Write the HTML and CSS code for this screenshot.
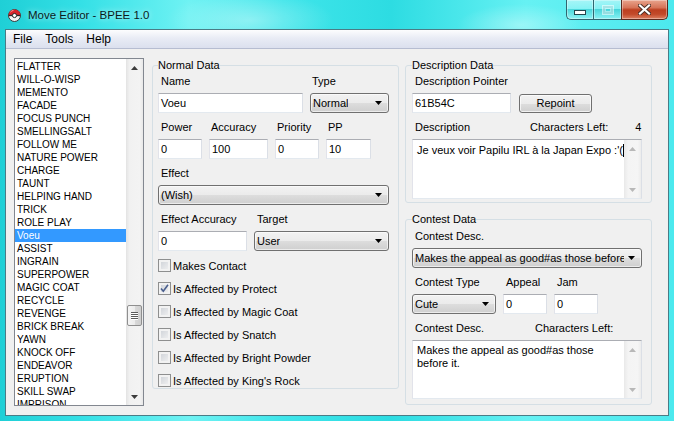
FILE: index.html
```html
<!DOCTYPE html>
<html>
<head>
<meta charset="utf-8">
<title>Move Editor - BPEE 1.0</title>
<link rel="stylesheet" href="styles.css">
</head>
<body>
<div class="window">
  <div class="titlebar">
    <svg class="app-icon" width="13" height="13" viewBox="0 0 13 13">
      <circle cx="6.5" cy="6.5" r="6" fill="#f4f4f4" stroke="#3a3a3a" stroke-width="1"/>
      <path d="M0.5 6.5 A6 6 0 0 1 12.5 6.5 Z" fill="#d8242c"/>
      <path d="M2.5 3.2 A4.5 4.5 0 0 1 5.5 1.4" stroke="#ff9a9a" stroke-width="1" fill="none"/>
      <line x1="0.5" y1="6.5" x2="12.5" y2="6.5" stroke="#2a2a2a" stroke-width="1.3"/>
      <circle cx="6.5" cy="6.5" r="2.1" fill="#ffffff" stroke="#2a2a2a" stroke-width="1"/>
    </svg>
    <span class="title">Move Editor - BPEE 1.0</span>
    <div class="controls">
      <div class="ctl min"><span class="min-glyph"></span></div>
      <div class="ctl max"><span class="max-glyph"></span></div>
      <div class="ctl close">
        <svg width="13" height="11" viewBox="0 0 13 11">
          <path d="M2 1.5 L11 9.5 M11 1.5 L2 9.5" stroke="#4a2e26" stroke-width="4" stroke-linecap="square"/>
          <path d="M2 1.5 L11 9.5 M11 1.5 L2 9.5" stroke="#ffffff" stroke-width="2.2" stroke-linecap="square"/>
        </svg>
      </div>
    </div>
  </div>

  <div class="client">
    <div class="menubar">
      <span class="menu-item">File</span>
      <span class="menu-item">Tools</span>
      <span class="menu-item">Help</span>
    </div>

    <div class="content">
      <div class="listbox">
        <ul class="items">
          <li>FLATTER</li>
          <li>WILL-O-WISP</li>
          <li>MEMENTO</li>
          <li>FACADE</li>
          <li>FOCUS PUNCH</li>
          <li>SMELLINGSALT</li>
          <li>FOLLOW ME</li>
          <li>NATURE POWER</li>
          <li>CHARGE</li>
          <li>TAUNT</li>
          <li>HELPING HAND</li>
          <li>TRICK</li>
          <li>ROLE PLAY</li>
          <li class="sel">Voeu</li>
          <li>ASSIST</li>
          <li>INGRAIN</li>
          <li>SUPERPOWER</li>
          <li>MAGIC COAT</li>
          <li>RECYCLE</li>
          <li>REVENGE</li>
          <li>BRICK BREAK</li>
          <li>YAWN</li>
          <li>KNOCK OFF</li>
          <li>ENDEAVOR</li>
          <li>ERUPTION</li>
          <li>SKILL SWAP</li>
          <li>IMPRISON</li>
        </ul>
        <div class="vscroll">
          <div class="sb-btn">
            <svg width="7" height="4" viewBox="0 0 7 4"><polygon points="0,4 7,4 3.5,0" fill="#3c3c3c"/></svg>
          </div>
          <div class="sb-track">
            <div class="thumb">
              <span class="grip"></span><span class="grip"></span><span class="grip"></span><span class="grip"></span>
            </div>
          </div>
          <div class="sb-btn">
            <svg width="7" height="4" viewBox="0 0 7 4"><polygon points="0,0 7,0 3.5,4" fill="#3c3c3c"/></svg>
          </div>
        </div>
      </div>

      <fieldset class="group normal">
        <legend>Normal Data</legend>
        <div class="row">
          <div class="field w145"><span class="lbl">Name</span><div class="tb">Voeu</div></div>
          <div class="field w79"><span class="lbl lbl2">Type</span>
            <div class="combo"><span class="ctext">Normal</span><svg class="arrow" width="7" height="4" viewBox="0 0 7 4"><polygon points="0,0 7,0 3.5,4" fill="#000"/></svg></div>
          </div>
        </div>
        <div class="row">
          <div class="field w44"><span class="lbl">Power</span><div class="tb">0</div></div>
          <div class="field w59"><span class="lbl lbl2">Accuracy</span><div class="tb">100</div></div>
          <div class="field w44"><span class="lbl lbl2">Priority</span><div class="tb">0</div></div>
          <div class="field w45"><span class="lbl lbl2">PP</span><div class="tb">10</div></div>
        </div>
        <div class="row">
          <div class="field w231"><span class="lbl">Effect</span>
            <div class="combo"><span class="ctext">(Wish)</span><svg class="arrow" width="7" height="4" viewBox="0 0 7 4"><polygon points="0,0 7,0 3.5,4" fill="#000"/></svg></div>
          </div>
        </div>
        <div class="row">
          <div class="field w89"><span class="lbl">Effect Accuracy</span><div class="tb">0</div></div>
          <div class="field w135"><span class="lbl">Target</span>
            <div class="combo"><span class="ctext">User</span><svg class="arrow" width="7" height="4" viewBox="0 0 7 4"><polygon points="0,0 7,0 3.5,4" fill="#000"/></svg></div>
          </div>
        </div>
        <div class="checks">
          <div class="check"><span class="box"></span><span>Makes Contact</span></div>
          <div class="check"><span class="box"><svg width="11" height="11" viewBox="0 0 11 11"><path d="M2 5.5 L4.3 8.3 L9 1.8" stroke="#4a5f8e" stroke-width="1.6" fill="none"/></svg></span><span>Is Affected by Protect</span></div>
          <div class="check"><span class="box"></span><span>Is Affected by Magic Coat</span></div>
          <div class="check"><span class="box"></span><span>Is Affected by Snatch</span></div>
          <div class="check"><span class="box"></span><span>Is Affected by Bright Powder</span></div>
          <div class="check"><span class="box"></span><span>Is Affected by King's Rock</span></div>
        </div>
      </fieldset>

      <div class="rightcol">
        <fieldset class="group desc">
          <legend>Description Data</legend>
          <span class="lbl block">Description Pointer</span>
          <div class="row ptr">
            <div class="tb w99">61B54C</div>
            <div class="button">Repoint</div>
          </div>
          <div class="labelrow">
            <span class="lbl w115">Description</span>
            <span class="lbl">Characters Left:</span>
            <span class="lbl count">4</span>
          </div>
          <div class="memo h60">
            <div class="memo-text nowrap">Je veux voir Papilu IRL à la Japan Expo :'(<span class="caret"></span></div>
            <div class="memo-scroll">
              <svg width="7" height="4" viewBox="0 0 7 4"><polygon points="0,4 7,4 3.5,0" fill="#b8b8b8"/></svg>
              <svg width="7" height="4" viewBox="0 0 7 4"><polygon points="0,0 7,0 3.5,4" fill="#b8b8b8"/></svg>
            </div>
          </div>
        </fieldset>

        <fieldset class="group contest">
          <legend>Contest Data</legend>
          <span class="lbl block">Contest Desc.</span>
          <div class="row">
            <div class="combo w230"><span class="ctext clip">Makes the appeal as good#as those before</span><svg class="arrow" width="7" height="4" viewBox="0 0 7 4"><polygon points="0,0 7,0 3.5,4" fill="#000"/></svg></div>
          </div>
          <div class="row">
            <div class="field w84"><span class="lbl">Contest Type</span>
              <div class="combo"><span class="ctext">Cute</span><svg class="arrow" width="7" height="4" viewBox="0 0 7 4"><polygon points="0,0 7,0 3.5,4" fill="#000"/></svg></div>
            </div>
            <div class="field w44"><span class="lbl">Appeal</span><div class="tb">0</div></div>
            <div class="field w44"><span class="lbl">Jam</span><div class="tb">0</div></div>
          </div>
          <div class="labelrow">
            <span class="lbl w120">Contest Desc.</span>
            <span class="lbl">Characters Left:</span>
          </div>
          <div class="memo h59">
            <div class="memo-text">Makes the appeal as good#as those before it.</div>
            <div class="memo-scroll">
              <svg width="7" height="4" viewBox="0 0 7 4"><polygon points="0,4 7,4 3.5,0" fill="#b8b8b8"/></svg>
              <svg width="7" height="4" viewBox="0 0 7 4"><polygon points="0,0 7,0 3.5,4" fill="#b8b8b8"/></svg>
            </div>
          </div>
        </fieldset>
      </div>
    </div>
  </div>
</div>
</body>
</html>
```

FILE: styles.css
```css
* { box-sizing: border-box; }

html, body {
  margin: 0;
  padding: 0;
}

body {
  width: 674px;
  height: 421px;
  overflow: hidden;
  font-family: "Liberation Sans", Arial, sans-serif;
  font-size: 11px;
  color: #000;
}

.window {
  height: 421px;
  display: flex;
  flex-direction: column;
  background:
    radial-gradient(ellipse 120px 40px at 250px 20px, rgba(255,255,255,0.35), rgba(255,255,255,0) 70%),
    radial-gradient(ellipse 90px 30px at 520px 25px, rgba(255,255,255,0.35), rgba(255,255,255,0) 70%),
    linear-gradient(90deg, #1fcfd6 0%, #34e0e6 12%, #6ff2f3 28%, #3fe5ea 42%, #2ddce2 58%, #66f1f3 78%, #4ce9ee 100%);
}

/* title bar */
.titlebar {
  height: 29px;
  flex: none;
  display: flex;
  align-items: center;
}

.app-icon {
  margin-left: 8px;
  margin-top: 1px;
  flex: none;
}

.title {
  margin-left: 7px;
  margin-top: 1px;
  font-size: 11.5px;
  color: #0b1a1c;
  text-shadow: 0 0 6px rgba(255,255,255,0.8);
}

.controls {
  display: flex;
  align-self: flex-start;
  margin-left: auto;
  margin-right: 6px;
}

.ctl {
  height: 20px;
  display: flex;
  align-items: center;
  justify-content: center;
  border: 1px solid #2f6670;
  border-top: none;
  box-shadow: inset 0 0 0 1px rgba(255,255,255,0.35);
}

.min {
  width: 27px;
  border-right: none;
  border-bottom-left-radius: 5px;
  background: linear-gradient(rgba(255,255,255,0.45), rgba(255,255,255,0.25) 50%, rgba(0,110,120,0.18) 50%, rgba(255,255,255,0.3));
}

.max {
  width: 28px;
  border-right: none;
  background: linear-gradient(rgba(255,255,255,0.45), rgba(255,255,255,0.25) 50%, rgba(0,110,120,0.18) 50%, rgba(255,255,255,0.3));
}

.close {
  width: 47px;
  border-bottom-right-radius: 5px;
  border-color: #5a2b1f;
  background: linear-gradient(#e9a48d, #d67458 40%, #bd3f20 52%, #c24a2a 75%, #dc8062);
}

.min-glyph {
  width: 12px;
  height: 5px;
  margin-top: 6px;
  background: #fff;
  border: 1px solid #23464d;
}

.max-glyph {
  width: 12px;
  height: 10px;
  border: 1px solid rgba(255,255,255,0.55);
  box-shadow: inset 0 0 0 2px rgba(120,190,195,0.35), inset 0 0 0 3px rgba(255,255,255,0.45);
}

/* client area */
.client {
  flex: 1;
  min-height: 0;
  margin: 0 5px 5px 5px;
  border: 1px solid #4a7c86;
  background: #f0f0f0;
  display: flex;
  flex-direction: column;
}

.menubar {
  height: 19px;
  flex: none;
  display: flex;
  align-items: center;
  padding-left: 7px;
  font-size: 12px;
  background: linear-gradient(#fdfdfe, #e9ecf5 45%, #dbe0ee);
  border-bottom: 1px solid #b6bdd1;
}

.menu-item {
  margin-right: 13px;
}

.content {
  flex: 1;
  display: flex;
  align-items: flex-start;
  padding: 9px 0 0 8px;
}

/* list box */
.listbox {
  width: 130px;
  height: 348px;
  flex: none;
  display: flex;
  border: 1px solid #828790;
  background: #fff;
  overflow: hidden;
}

.items {
  flex: 1;
  margin: 0;
  padding: 1px 0 0 0;
  list-style: none;
  overflow: hidden;
  font-size: 10px;
}

.items li {
  height: 13px;
  line-height: 13px;
  padding-left: 2px;
  white-space: nowrap;
}

.items li.sel {
  background: #3399ff;
  color: #fff;
}

.vscroll {
  width: 17px;
  flex: none;
  display: flex;
  flex-direction: column;
  background: linear-gradient(90deg, #e3e3e3, #f1f1f1 20%, #f3f3f3 80%, #e8e8e8);
}

.sb-btn {
  height: 17px;
  flex: none;
  display: flex;
  align-items: center;
  justify-content: center;
}

.sb-track {
  flex: 1;
}

.thumb {
  margin: 229px 1px 0 1px;
  height: 21px;
  border: 1px solid #8f8f8f;
  border-radius: 2px;
  background: linear-gradient(90deg, #f5f5f5, #ececec 50%, #dadada 51%, #cfcfcf);
  display: flex;
  flex-direction: column;
  align-items: center;
  justify-content: center;
  gap: 1px;
}

.grip {
  width: 7px;
  height: 1px;
  background: #5b5b5b;
  box-shadow: 0 1px 0 #ffffff;
}

/* group boxes */
.group {
  margin: 1px 0 0 0;
  border: 1px solid #d5dfe5;
  border-radius: 3px;
  width: 247px;
  min-width: 0;
}

.group legend {
  padding: 0;
  line-height: 13px;
  height: 13px;
}

.normal {
  margin-left: 8px;
  padding: 3px 5px 1px 5px;
}

.rightcol {
  margin-left: 6px;
  width: 247px;
  display: flex;
  flex-direction: column;
}

.desc {
  padding: 3px 6px 3px 6px;
}

.contest {
  margin-top: 10px;
  padding: 4px 6px 5px 6px;
}

.row {
  display: flex;
  gap: 7px;
  margin-bottom: 8px;
}

.field {
  display: flex;
  flex-direction: column;
}

.lbl {
  height: 13px;
  line-height: 13px;
  padding-left: 3px;
  white-space: nowrap;
}

.lbl2 { padding-left: 2px; }

.field .lbl { margin-bottom: 5px; }

.lbl.block {
  display: block;
  margin-bottom: 5px;
}

.labelrow {
  display: flex;
  margin-bottom: 5px;
}

.w44 { width: 44px; }
.w45 { width: 45px; }
.w59 { width: 59px; }
.w79 { width: 79px; }
.w84 { width: 84px; }
.w89 { width: 89px; }
.w99 { width: 99px; }
.w115 { width: 115px; }
.w120 { width: 120px; }
.w135 { width: 135px; }
.w145 { width: 145px; }
.w230 { width: 230px; }
.w231 { width: 231px; }

.count {
  width: 34px;
  text-align: right;
  padding-right: 1px;
}

/* text boxes */
.tb {
  height: 20px;
  line-height: 18px;
  padding: 0 2px;
  background: #fff;
  border: 1px solid;
  border-color: #abadb3 #dbdfe6 #e3e9ef #e2e3ea;
  white-space: nowrap;
}

/* combo boxes */
.combo {
  height: 20px;
  display: flex;
  align-items: center;
  padding-left: 2px;
  border: 1px solid #707070;
  border-radius: 3px;
  background: linear-gradient(#f2f2f2, #ebebeb 50%, #dddddd 51%, #cfcfcf);
  box-shadow: inset 0 0 0 1px rgba(255,255,255,0.6);
  overflow: hidden;
}

.ctext {
  white-space: nowrap;
  overflow: hidden;
}

.ctext.clip {
  width: 209px;
}

.combo .arrow {
  flex: none;
  margin-left: auto;
  margin-right: 6px;
}

/* button */
.ptr {
  align-items: center;
  gap: 8px;
}

.button {
  width: 73px;
  height: 19px;
  line-height: 17px;
  text-align: center;
  border: 1px solid #707070;
  border-radius: 3px;
  background: linear-gradient(#f2f2f2, #ebebeb 50%, #dddddd 51%, #cfcfcf);
  box-shadow: inset 0 0 0 1px rgba(255,255,255,0.7);
}

/* checkboxes */
.checks {
  margin-top: 5px;
  display: flex;
  flex-direction: column;
  gap: 10px;
}

.check {
  display: flex;
  align-items: center;
  height: 13px;
  gap: 2px;
}

.box {
  width: 13px;
  height: 13px;
  flex: none;
  border: 1px solid #8e8f8f;
  background: linear-gradient(135deg, #cbcfd5, #f4f4f4);
  box-shadow: inset 0 0 0 2px #f2f2f2;
  display: flex;
  align-items: center;
  justify-content: center;
}

/* memo boxes */
.memo {
  width: 230px;
  display: flex;
  background: #fff;
  border: 1px solid;
  border-color: #abadb3 #dbdfe6 #e3e9ef #e2e3ea;
}

.h60 { height: 60px; }
.h59 { height: 59px; }

.memo-text {
  flex: 1;
  min-width: 0;
  padding: 3px 2px 0 4px;
  line-height: 13px;
  overflow: hidden;
}

.desc .memo-text { padding-top: 4px; }

.nowrap { white-space: nowrap; }

.caret {
  display: inline-block;
  width: 1px;
  height: 13px;
  background: #000;
  vertical-align: top;
}

.memo-scroll {
  width: 17px;
  flex: none;
  display: flex;
  flex-direction: column;
  align-items: center;
  justify-content: space-between;
  padding: 7px 0 6px 0;
  background: linear-gradient(90deg, #e9e9e9, #f4f4f4 25%, #f5f5f5 80%, #ececec);
}
```
